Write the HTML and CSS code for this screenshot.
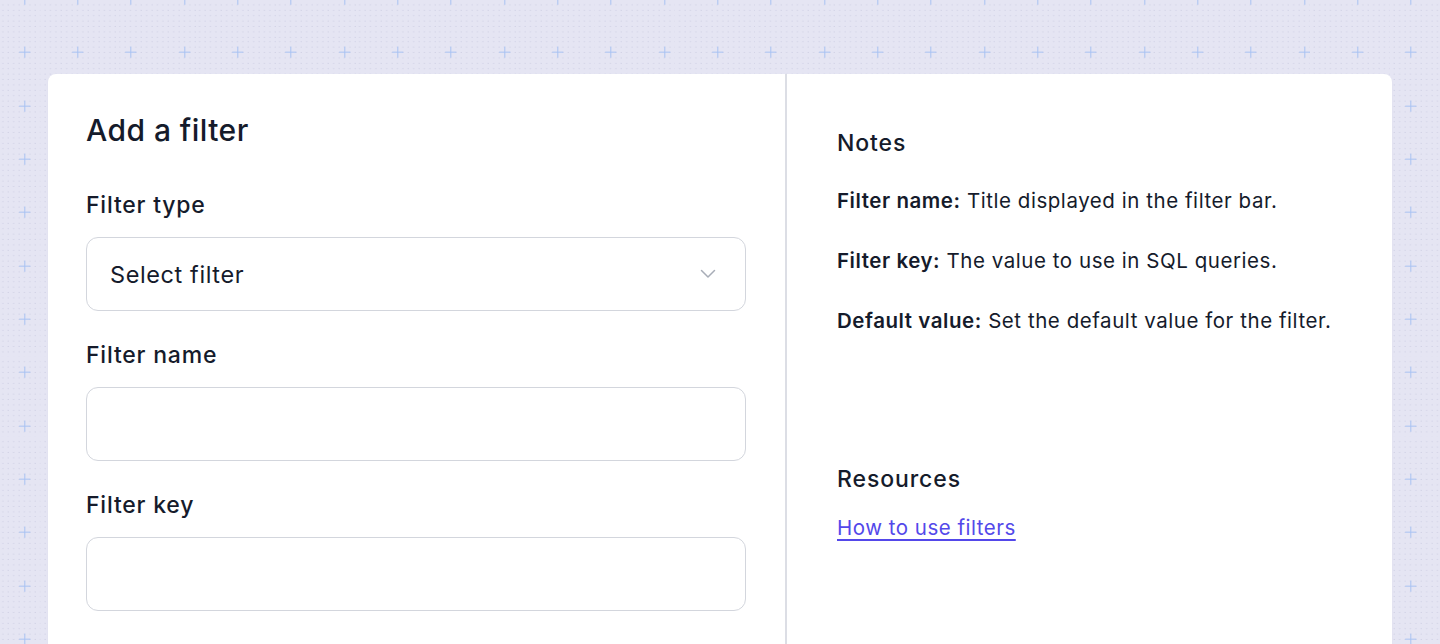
FILE: index.html
```html
<!DOCTYPE html>
<html lang="en">
<head>
<meta charset="utf-8">
<title>Add a filter</title>
<link rel="stylesheet" href="styles.css">
</head>
<body>
<div class="page">
  <div class="card">
    <section class="form">
      <h1 class="title">Add a filter</h1>
      <div class="field">
        <label class="label">Filter type</label>
        <div class="select">
          <span class="select-text">Select filter</span>
          <svg class="chevron" width="16" height="10" viewBox="0 0 16 10"><path d="M1.5 1.5 L8 8 L14.5 1.5" fill="none" stroke="#a8adb7" stroke-width="1.5" stroke-linecap="round" stroke-linejoin="round"/></svg>
        </div>
      </div>
      <div class="field">
        <label class="label">Filter name</label>
        <div class="input"></div>
      </div>
      <div class="field">
        <label class="label">Filter key</label>
        <div class="input"></div>
      </div>
    </section>
    <aside class="notes">
      <h2 class="heading">Notes</h2>
      <p class="note"><strong>Filter name:</strong> Title displayed in the filter bar.</p>
      <p class="note"><strong>Filter key:</strong> The value to use in SQL queries.</p>
      <p class="note"><strong>Default value:</strong> Set the default value for the filter.</p>
      <h2 class="heading resources">Resources</h2>
      <a class="link" href="#">How to use filters</a>
    </aside>
  </div>
</div>
</body>
</html>
```

FILE: styles.css
```css
html, body {
  margin: 0;
  padding: 0;
  height: 100%;
  overflow: hidden;
}

body {
  font-family: "Inter", "Noto Sans", sans-serif;
  color: #151b2b;
  background-color: #e5e5f3;
  background-image: url("data:image/svg+xml,%3Csvg xmlns='http://www.w3.org/2000/svg' width='160' height='160' viewBox='0 0 160 160'%3E%3Cdefs%3E%3Cpattern id='d' width='16' height='16' patternUnits='userSpaceOnUse'%3E%3Crect x='7' y='13' width='3' height='3' fill='%23cbcde2'/%3E%3C/pattern%3E%3C/defs%3E%3Crect width='160' height='160' fill='url(%23d)'/%3E%3Crect x='57' y='156' width='33' height='3' fill='%23a9c3f3'/%3E%3Crect x='72' y='141' width='3' height='33' fill='%23a9c3f3'/%3E%3Crect x='57' y='-4' width='33' height='3' fill='%23a9c3f3'/%3E%3Crect x='72' y='-19' width='3' height='33' fill='%23a9c3f3'/%3E%3C/svg%3E");
  background-size: 53.333px 53.333px;
  background-position: 0 0;
}

.page {
  padding: 74px 48px 0 48px;
}

.card {
  background: #ffffff;
  border-radius: 8px;
  display: grid;
  grid-template-columns: 739px 1fr;
  height: 640px;
  box-shadow: 0 1px 2px rgba(30, 30, 60, 0.04);
}

.form {
  padding: 38px 39px 0 38px;
  border-right: 2px solid #dcdee5;
}

.title {
  margin: 0;
  font-size: 30px;
  line-height: 36px;
  font-weight: 500;
  letter-spacing: 0.45px;
}

.field {
  display: flex;
  flex-direction: column;
  gap: 18px;
  margin-top: 30px;
}

.field:first-of-type {
  margin-top: 43px;
}

.label {
  font-size: 23px;
  line-height: 28px;
  font-weight: 500;
  letter-spacing: 0.8px;
}

.select, .input {
  box-sizing: border-box;
  height: 74px;
  border: 1.5px solid #d3d6dd;
  border-radius: 12px;
  background: #ffffff;
}

.select {
  display: flex;
  align-items: center;
  justify-content: space-between;
  padding: 0 29px 0 23px;
}

.select-text {
  font-size: 23.5px;
  font-weight: 400;
  letter-spacing: 0.6px;
  color: #151b2b;
}

.chevron {
  display: block;
}

.notes {
  padding: 55px 40px 0 50px;
}

.heading {
  margin: 0;
  font-size: 23px;
  line-height: 28px;
  font-weight: 500;
  letter-spacing: 0.9px;
}

.note {
  margin: 32px 0 0 0;
  font-size: 20.5px;
  line-height: 28px;
  letter-spacing: 0.55px;
}

.note:first-of-type {
  margin-top: 30px;
}

.note strong {
  font-weight: 600;
}

.resources {
  margin-top: 130px;
}

.link {
  display: inline-block;
  margin-top: 21px;
  font-size: 20.5px;
  line-height: 28px;
  letter-spacing: 0.5px;
  color: #5348ea;
  text-decoration: underline;
  text-underline-offset: 4px;
  text-decoration-thickness: 1.5px;
}
```
